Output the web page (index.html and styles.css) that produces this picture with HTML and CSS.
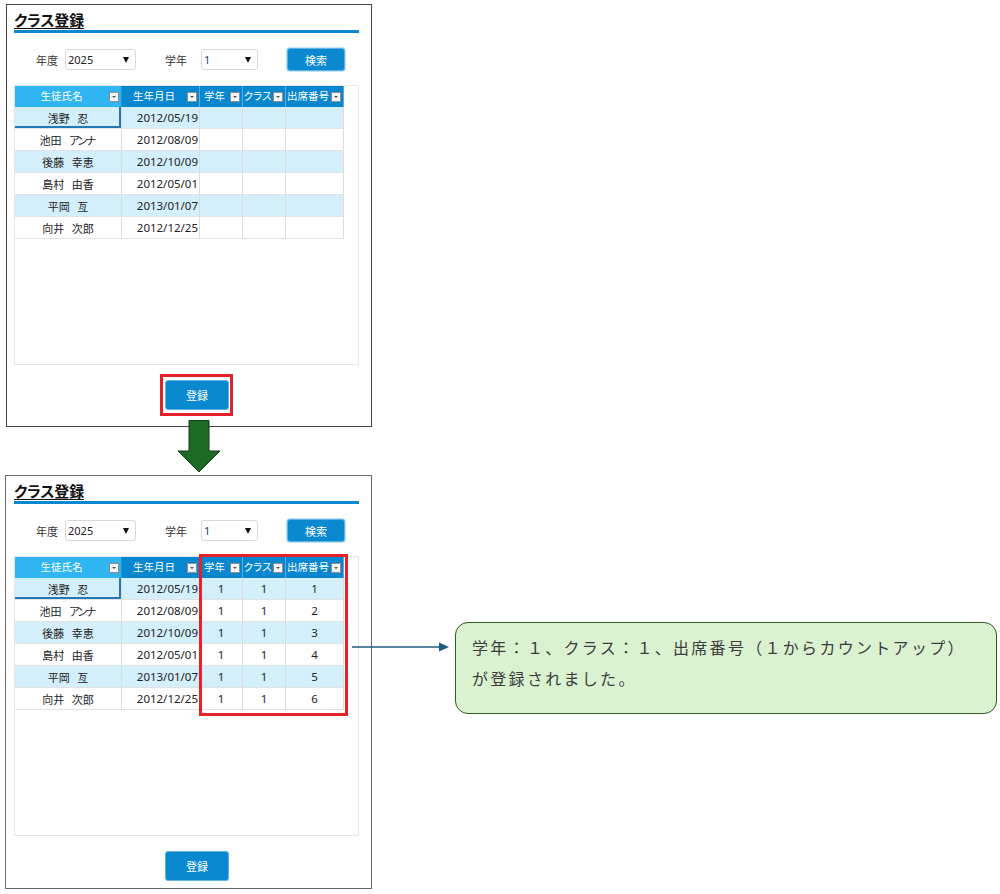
FILE: index.html
```html
<!DOCTYPE html>
<html lang="ja">
<head>
<meta charset="utf-8">
<title>クラス登録</title>
<link rel="stylesheet" href="styles.css">
</head>
<body>
<div class="page">

  <section class="panel panel-before">
    <h1 class="title">クラス登録</h1>
    <div class="title-bar"></div>
    <div class="filters">
      <span class="label">年度</span>
      <div class="select select-year"><span>2025</span><i class="caret"></i></div>
      <span class="label label-grade">学年</span>
      <div class="select select-grade"><span class="sel-val">1</span><i class="caret"></i></div>
      <button class="btn btn-search">検索</button>
    </div>
    <div class="grid">
      <table class="table">
        <colgroup><col class="c1"><col class="c2"><col class="c3"><col class="c4"><col class="c5"></colgroup>
        <thead>
          <tr>
            <th class="th-active"><div class="th-in"><span class="th-label">生徒氏名</span><span class="sort"></span></div></th>
            <th><div class="th-in"><span class="th-label">生年月日</span><span class="sort"></span></div></th>
            <th><div class="th-in"><span class="th-label">学年</span><span class="sort"></span></div></th>
            <th><div class="th-in"><span class="th-label">クラス</span><span class="sort"></span></div></th>
            <th><div class="th-in"><span class="th-label">出席番号</span><span class="sort"></span></div></th>
          </tr>
        </thead>
        <tbody>
          <tr class="alt"><td class="name selected">浅野&ensp;&thinsp;忍</td><td class="date">2012/05/19</td><td></td><td></td><td></td></tr>
          <tr><td class="name">池田&ensp;&thinsp;<span class="kana">アンナ</span></td><td class="date">2012/08/09</td><td></td><td></td><td></td></tr>
          <tr class="alt"><td class="name">後藤&ensp;&thinsp;幸恵</td><td class="date">2012/10/09</td><td></td><td></td><td></td></tr>
          <tr><td class="name">島村&ensp;&thinsp;由香</td><td class="date">2012/05/01</td><td></td><td></td><td></td></tr>
          <tr class="alt"><td class="name">平岡&ensp;&thinsp;亙</td><td class="date">2013/01/07</td><td></td><td></td><td></td></tr>
          <tr><td class="name">向井&ensp;&thinsp;次郎</td><td class="date">2012/12/25</td><td></td><td></td><td></td></tr>
        </tbody>
      </table>
    </div>
    <div class="actions"><span class="highlight"><button class="btn btn-register">登録</button></span></div>
  </section>

  <div class="flow-arrow">
    <svg width="44" height="53" viewBox="0 0 44 53">
      <polygon points="12,0.5 32,0.5 32,31 43,31 22,52 1,31 12,31" fill="#1c6a24" stroke="#103d12" stroke-width="1"/>
    </svg>
  </div>

  <div class="result-row">
    <section class="panel panel-after">
      <h1 class="title">クラス登録</h1>
      <div class="title-bar"></div>
      <div class="filters">
        <span class="label">年度</span>
        <div class="select select-year"><span>2025</span><i class="caret"></i></div>
        <span class="label label-grade">学年</span>
        <div class="select select-grade"><span class="sel-val">1</span><i class="caret"></i></div>
        <button class="btn btn-search">検索</button>
      </div>
      <div class="grid">
        <table class="table">
          <colgroup><col class="c1"><col class="c2"><col class="c3"><col class="c4"><col class="c5"></colgroup>
          <thead>
            <tr>
              <th class="th-active"><div class="th-in"><span class="th-label">生徒氏名</span><span class="sort"></span></div></th>
              <th><div class="th-in"><span class="th-label">生年月日</span><span class="sort"></span></div></th>
              <th><div class="th-in"><span class="th-label">学年</span><span class="sort"></span></div></th>
              <th><div class="th-in"><span class="th-label">クラス</span><span class="sort"></span></div></th>
              <th><div class="th-in"><span class="th-label">出席番号</span><span class="sort"></span></div></th>
            </tr>
          </thead>
          <tbody>
            <tr class="alt"><td class="name selected">浅野&ensp;&thinsp;忍</td><td class="date">2012/05/19</td><td class="num">1</td><td class="num">1</td><td class="num">1</td></tr>
            <tr><td class="name">池田&ensp;&thinsp;<span class="kana">アンナ</span></td><td class="date">2012/08/09</td><td class="num">1</td><td class="num">1</td><td class="num">2</td></tr>
            <tr class="alt"><td class="name">後藤&ensp;&thinsp;幸恵</td><td class="date">2012/10/09</td><td class="num">1</td><td class="num">1</td><td class="num">3</td></tr>
            <tr><td class="name">島村&ensp;&thinsp;由香</td><td class="date">2012/05/01</td><td class="num">1</td><td class="num">1</td><td class="num">4</td></tr>
            <tr class="alt"><td class="name">平岡&ensp;&thinsp;亙</td><td class="date">2013/01/07</td><td class="num">1</td><td class="num">1</td><td class="num">5</td></tr>
            <tr><td class="name">向井&ensp;&thinsp;次郎</td><td class="date">2012/12/25</td><td class="num">1</td><td class="num">1</td><td class="num">6</td></tr>
          </tbody>
        </table>
        <div class="red-box"></div>
      </div>
      <div class="actions"><button class="btn btn-register">登録</button></div>
    </section>

    <svg class="connector" width="98" height="12" viewBox="0 0 98 12">
      <line x1="0" y1="6" x2="88" y2="6" stroke="#1d5a80" stroke-width="1.5"/>
      <polygon points="87,1.5 97,6 87,10.5" fill="#1d5a80"/>
    </svg>

    <div class="callout">学年：１、クラス：１、出席番号（１からカウントアップ）<br>が登録されました。</div>
  </div>

</div>
</body>
</html>
```

FILE: styles.css
```css
* { box-sizing: border-box; }

html, body {
  margin: 0;
  padding: 0;
  background: #fff;
}

body {
  font-family: "Noto Sans", "Noto Sans CJK JP", sans-serif;
  color: #222;
}

.page {
  width: 1000px;
  padding-top: 4px;
}

/* ---------- panel ---------- */
.panel {
  width: 366px;
  margin-left: 6px;
  padding: 5px 12px 16px 7px;
  border: 1px solid #454545;
  background: #fff;
}

.panel-after {
  width: 367px;
  margin-left: 5px;
  padding-left: 8px;
  padding-bottom: 7px;
  border-color: #6a6a6a;
  box-shadow: 0 1px 0 #a0a0a0;
}

.title {
  margin: 0;
  height: 20px;
  font-family: "Noto Sans CJK JP", sans-serif;
  font-size: 15px;
  font-weight: 700;
  line-height: 20px;
  letter-spacing: -0.2px;
  color: #111;
  text-decoration: underline;
  text-decoration-thickness: 1px;
  text-underline-offset: 2px;
  font-feature-settings: "palt";
}

.title-bar {
  height: 3px;
  background: #0a88d0;
}

/* ---------- filters ---------- */
.filters {
  display: flex;
  align-items: center;
  height: 23px;
  margin-top: 15px;
  padding-left: 22px;
}

.label {
  font-family: "Noto Sans CJK JP", sans-serif;
  font-size: 11px;
  color: #333;
  margin-right: 7px;
}

.label-grade {
  margin-left: 29px;
  margin-right: 14px;
}

.select {
  display: flex;
  align-items: center;
  justify-content: space-between;
  height: 21px;
  padding: 0 6px 0 2px;
  border: 1px solid #d8d8d8;
  border-radius: 3px;
  background: #fff;
  font-size: 11px;
  color: #222;
}

.select-year { width: 71px; }
.select-grade { width: 57px; }
.sel-val { color: #233f78; }

.caret {
  width: 0;
  height: 0;
  border-left: 3px solid transparent;
  border-right: 3px solid transparent;
  border-top: 6px solid #111;
}

.btn {
  border: 1px solid #5fb2e2;
  border-radius: 3px;
  background: #0a88d0;
  color: #fff;
  font-family: "Noto Sans CJK JP", sans-serif;
  font-size: 11px;
  padding: 0;
  cursor: pointer;
}

.btn-search {
  width: 58px;
  height: 23px;
  margin-left: 29px;
  box-shadow: 0 0 0 1px #c4e3f5;
}

/* ---------- grid ---------- */
.grid {
  position: relative;
  height: 280px;
  margin-top: 14px;
  border: 1px solid #e6e6e6;
}

.table {
  table-layout: fixed;
  border-collapse: separate;
  border-spacing: 0;
  width: 329px;
}

.c1 { width: 107px; }
.c2 { width: 78px; }
.c3 { width: 43px; }
.c4 { width: 43px; }
.c5 { width: 58px; }

.table th {
  height: 21px;
  padding: 0;
  background: #0787cf;
  border-right: 1px solid #5aaedd;
  color: #fff;
  font-weight: 400;
}

.table th.th-active {
  background: #2fb6f2;
  border-right-color: #2a8fc8;
}

.th-in {
  display: flex;
  align-items: center;
  height: 21px;
  padding-right: 2px;
}

.th-label {
  flex: 1;
  text-align: center;
  white-space: nowrap;
  font-family: "Noto Sans CJK JP", sans-serif;
  font-size: 10.5px;
  font-feature-settings: "palt";
  line-height: 1;
}

.sort {
  position: relative;
  flex: none;
  width: 10px;
  height: 10px;
  margin-left: 1px;
  background: #f6f6f6;
  border: 1px solid #8e8e8e;
}

.sort::after {
  content: "";
  position: absolute;
  left: 2px;
  top: 3px;
  border-left: 2px solid transparent;
  border-right: 2px solid transparent;
  border-top: 2px solid #555;
}

.table td {
  height: 22px;
  padding: 0 2px;
  border-right: 1px solid #dcdcdc;
  border-bottom: 1px solid #e2e2e2;
  font-size: 11.5px;
  color: #222;
  white-space: nowrap;
  overflow: hidden;
}

.table tr.alt td { background: #d2effb; }

.table td.name {
  text-align: center;
  font-family: "Noto Sans CJK JP", sans-serif;
  font-size: 11px;
}

.kana {
  font-feature-settings: "palt";
  letter-spacing: -1.5px;
  margin-right: 1.5px;
}

.table td.date { text-align: right; padding-right: 1px; }
.table td.num { text-align: center; }

.table td.selected {
  box-shadow: inset -2px -2px 0 #2678b4;
}

.red-box {
  position: absolute;
  left: 184px;
  top: -3px;
  width: 149px;
  height: 162px;
  border: 3px solid #e5222b;
  pointer-events: none;
}

/* ---------- actions ---------- */
.actions {
  margin-top: 15px;
  padding-left: 151px;
  height: 30px;
}

.btn-register {
  display: block;
  width: 64px;
  height: 30px;
}

.highlight {
  position: relative;
  display: block;
  width: 64px;
  height: 30px;
}

.highlight::after {
  content: "";
  position: absolute;
  left: -5px;
  top: -6px;
  right: -4px;
  bottom: -6px;
  border: 3px solid #e5222b;
  pointer-events: none;
}

/* ---------- diagram ---------- */
.flow-arrow {
  position: relative;
  z-index: 2;
  width: 44px;
  height: 53px;
  margin-left: 177px;
  margin-top: -7px;
}

.flow-arrow svg { display: block; }

.result-row {
  position: relative;
  display: flex;
  align-items: flex-start;
  margin-top: 2px;
}

.connector {
  position: absolute;
  left: 352px;
  top: 166px;
}

.callout {
  width: 542px;
  height: 92px;
  margin-left: 83px;
  margin-top: 147px;
  padding: 9px 16px;
  border: 1.5px solid #2f5f1f;
  border-radius: 13px;
  background: #daf2d0;
  font-family: "Noto Sans CJK JP", sans-serif;
  font-size: 16px;
  line-height: 31px;
  letter-spacing: 2.3px;
  color: #3c3c3c;
  white-space: nowrap;
}
```
